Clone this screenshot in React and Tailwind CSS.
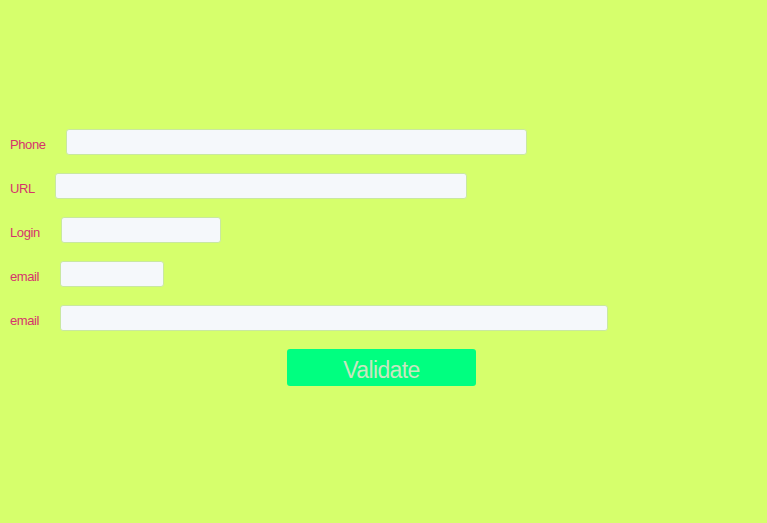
export default function App() {
  const rows = [
    { label: "Phone", lw: "w-[56px]", w: "w-[461px]" },
    { label: "URL", lw: "w-[45px]", w: "w-[412px]" },
    { label: "Login", lw: "w-[51px]", w: "w-[160px]" },
    { label: "email", lw: "w-[50px]", w: "w-[104px]" },
    { label: "email", lw: "w-[50px]", w: "w-[548px]" },
  ];
  return (
    <div className="w-[767px] h-[523px] bg-[#d6ff6c] font-['Liberation_Sans',Arial,sans-serif] pt-[129px]">
      <div className="flex flex-col gap-[18px] pl-[10px]">
        {rows.map((r, i) => (
          <div key={i} className="flex items-center h-[26px]">
            <span className={`${r.lw} shrink-0 text-[13px] text-[#d6336c] tracking-[-0.4px] leading-none pt-[4px]`}>{r.label}</span>
            <input
              type="text"
              className={`${r.w} h-[26px] bg-[#f5f8fb] border border-[#c9e8a0] rounded-[3px] outline-none`}
            />
          </div>
        ))}
      </div>
      <div className="flex pl-[287px] mt-[18px]">
        <button className="w-[189px] h-[37px] bg-[#00ff80] rounded-[3px] text-[23px] text-[#c8e6c0] tracking-[-0.6px] pt-[4px]">
          Validate
        </button>
      </div>
    </div>
  );
}
